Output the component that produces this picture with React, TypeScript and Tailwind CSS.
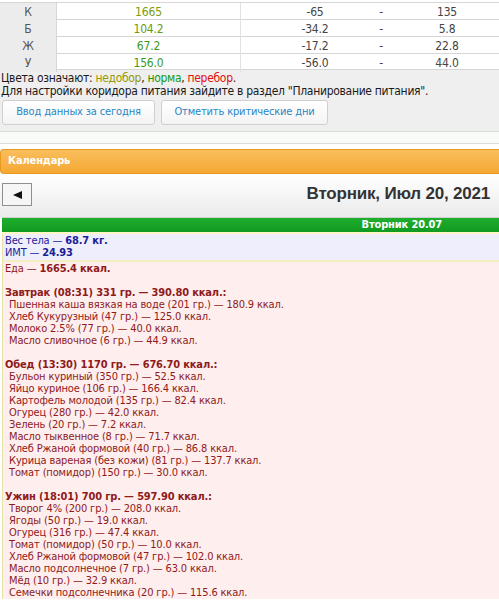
import React from "react";

type Row = { k: string; v: string; c: string; a: string; b: string; d: string };

const rows: Row[] = [
  { k: "К", v: "1665", c: "text-[#7d9c06]", a: "-65", b: "-", d: "135" },
  { k: "Б", v: "104.2", c: "text-[#6a9a0c]", a: "-34.2", b: "-", d: "5.8" },
  { k: "Ж", v: "67.2", c: "text-[#3a9a1c]", a: "-17.2", b: "-", d: "22.8" },
  { k: "У", v: "156.0", c: "text-[#3a9a1c]", a: "-56.0", b: "-", d: "44.0" },
];

const meals = [
  {
    title: "Завтрак (08:31) 331 гр. — 390.80 ккал.:",
    items: [
      "Пшенная каша вязкая на воде (201 гр.) — 180.9 ккал.",
      "Хлеб Кукурузный (47 гр.) — 125.0 ккал.",
      "Молоко 2.5% (77 гр.) — 40.0 ккал.",
      "Масло сливочное (6 гр.) — 44.9 ккал.",
    ],
  },
  {
    title: "Обед (13:30) 1170 гр. — 676.70 ккал.:",
    items: [
      "Бульон куриный (350 гр.) — 52.5 ккал.",
      "Яйцо куриное (106 гр.) — 166.4 ккал.",
      "Картофель молодой (135 гр.) — 82.4 ккал.",
      "Огурец (280 гр.) — 42.0 ккал.",
      "Зелень (20 гр.) — 7.2 ккал.",
      "Масло тыквенное (8 гр.) — 71.7 ккал.",
      "Хлеб Ржаной формовой (40 гр.) — 86.8 ккал.",
      "Курица вареная (без кожи) (81 гр.) — 137.7 ккал.",
      "Томат (помидор) (150 гр.) — 30.0 ккал.",
    ],
  },
  {
    title: "Ужин (18:01) 700 гр. — 597.90 ккал.:",
    items: [
      "Творог 4% (200 гр.) — 208.0 ккал.",
      "Ягоды (50 гр.) — 19.0 ккал.",
      "Огурец (316 гр.) — 47.4 ккал.",
      "Томат (помидор) (50 гр.) — 10.0 ккал.",
      "Хлеб Ржаной формовой (47 гр.) — 102.0 ккал.",
      "Масло подсолнечное (7 гр.) — 63.0 ккал.",
      "Мёд (10 гр.) — 32.9 ккал.",
      "Семечки подсолнечника (20 гр.) — 115.6 ккал.",
    ],
  },
];

export default function App() {
  return (
    <div className="w-[499px] h-[602px] overflow-hidden bg-white font-['DejaVu_Sans_Condensed','Liberation_Sans',sans-serif] text-[11px] tracking-[-0.15px] text-[#222]">
      {/* nutrition table */}
      <div className="border-t border-[#d6d6d6] mt-[2px]">
        {rows.map((r, i) => (
          <div
            key={r.k}
            className={`grid grid-cols-[57px_184px_41px_66px_66px_66px_1fr] items-center border-b border-[#d6d6d6] ${i === 3 ? "h-[16px]" : "h-[17px]"}`}
          >
            <div className="h-full flex items-center justify-center bg-[#ececec] border-r border-[#d6d6d6] text-[12px] text-[#555]">{r.k}</div>
            <div className={`h-full flex items-center justify-center border-r border-[#e2e2e2] text-[12px] ${r.c}`}>{r.v}</div>
            <div />
            <div className="text-center text-[12px] text-[#444]">{r.a}</div>
            <div className="text-center text-[12px] text-[#444]">{r.b}</div>
            <div className="text-center text-[12px] text-[#444]">{r.d}</div>
            <div />
          </div>
        ))}
      </div>

      {/* legend + buttons */}
      <div className="bg-[#efefef] pt-[2px] pb-[6px] border-b border-[#dadada]">
        <div className="px-[1px] text-[12px] leading-[13px] text-[#1a1a1a] tracking-[-0.3px]">
          Цвета означают: <span className="text-[#9a9a00]">недобор</span>, <span className="text-[#139a13]">норма</span>, <span className="text-[#e01010]">перебор</span>.
        </div>
        <div className="px-[1px] text-[12px] leading-[13px] text-[#1a1a1a] tracking-[-0.3px]">
          Для настройки коридора питания зайдите в раздел "Планирование питания".
        </div>
        <div className="flex gap-[6px] px-[2px] mt-[2px]">
          <button className="w-[153px] h-[25px] rounded-[3px] border border-[#cfcfcf] bg-gradient-to-b from-white to-[#f4f4f4] text-[11px] text-[#2a85c5]">
            Ввод данных за сегодня
          </button>
          <button className="w-[167px] h-[25px] rounded-[3px] border border-[#cfcfcf] bg-gradient-to-b from-white to-[#f4f4f4] text-[11px] text-[#2a85c5]">
            Отметить критические дни
          </button>
        </div>
      </div>
      <div className="h-[12px] bg-[#f8fbf8] border-b border-[#dcdcdc]" />
      <div className="h-[5px]" />

      {/* calendar header */}
      <div className="h-[25px] rounded-l-[4px] border border-r-0 border-[#e89a1e] bg-gradient-to-b from-[#f9be5c] to-[#f5a832] flex items-center pl-[7px] text-[11px] font-bold text-white">
        Календарь
      </div>

      <div className="bg-gradient-to-b from-white to-[#ebebeb] h-[43px] flex items-start justify-between pl-[2px] pr-[9px] pt-[9px]">
        <button className="w-[30px] h-[23px] border border-[#8f8f8f] bg-[#f6f6f6] flex items-center justify-center">
          <svg width="9" height="8" viewBox="0 0 9 8">
            <polygon points="0,4 9,0 9,8" fill="#111" />
          </svg>
        </button>
        <div className="font-['Liberation_Sans',sans-serif] text-[17px] leading-[22px] font-bold tracking-[-0.2px] text-[#333]">Вторник, Июл 20, 2021</div>
      </div>

      <div className="ml-[2px] border-t border-[#cfcfcf]">
        <div className="h-[14px] bg-gradient-to-b from-[#1fae2e] to-[#109a20] flex items-center justify-end pr-[57px] text-[11px] font-bold text-white">
          Вторник 20.07
        </div>
        <div className="h-[2px] bg-[#fff6c8]" />
        <div className="bg-[#eeeefc] border-l border-[#e6e2a8] border-b-2 border-b-[#f3eec0] px-[2px] py-[1px] text-[#1c1c98] leading-[12px]">
          <div>Вес тела — <b>68.7 кг.</b></div>
          <div>ИМТ — <b>24.93</b></div>
        </div>
        <div className="bg-[#ffeeee] border-l border-[#e6e2a8] px-[2px] pt-[1px] text-[#8e1b1b] leading-[12px]">
          <div>Еда — <b>1665.4 ккал.</b></div>
          {meals.map((m) => (
            <div key={m.title}>
              <div className="h-[12px]" />
              <div className="font-bold">{m.title}</div>
              {m.items.map((it) => (
                <div key={it} className="pl-[4px]">{it}</div>
              ))}
            </div>
          ))}
        </div>
      </div>
    </div>
  );
}
